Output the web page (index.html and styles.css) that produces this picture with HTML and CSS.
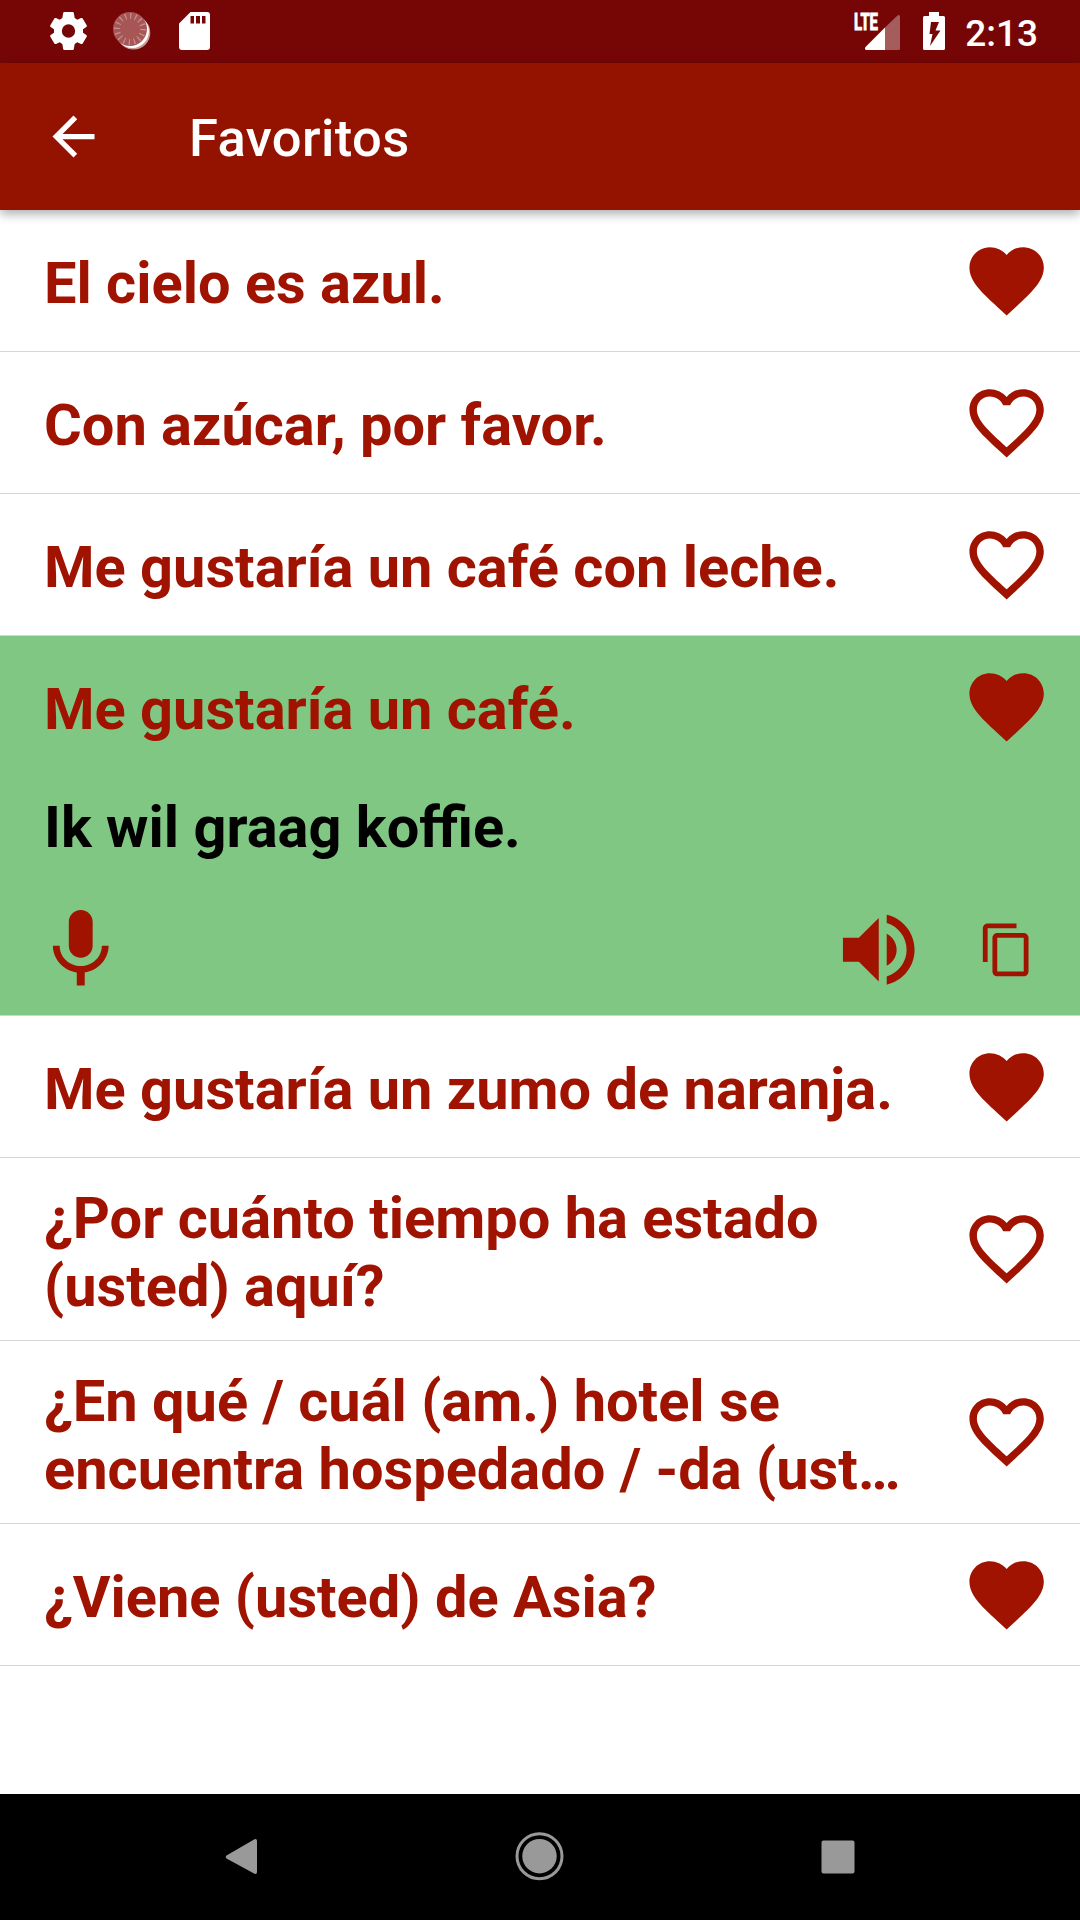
FILE: index.html
```html
<!DOCTYPE html>
<html lang="es">
<head>
<meta charset="utf-8">
<title>Favoritos</title>
<link rel="stylesheet" href="styles.css">
</head>
<body>
<svg class="defs" aria-hidden="true">
  <symbol id="heart" viewBox="0 0 24 24"><path d="M12 21.35l-1.45-1.32C5.4 15.36 2 12.28 2 8.5 2 5.42 4.42 3 7.5 3c1.74 0 3.41.81 4.5 2.09C13.09 3.81 14.76 3 16.5 3 19.58 3 22 5.42 22 8.5c0 3.78-3.4 6.86-8.55 11.54L12 21.35z"/></symbol>
  <symbol id="heart-outline" viewBox="0 0 24 24"><path d="M16.5 3c-1.74 0-3.41.81-4.5 2.09C10.91 3.81 9.24 3 7.5 3 4.42 3 2 5.42 2 8.5c0 3.78 3.4 6.86 8.55 11.54L12 21.35l1.45-1.32C18.6 15.36 22 12.28 22 8.5 22 5.42 19.58 3 16.5 3zm-4.4 15.55l-.1.1-.1-.1C7.14 14.24 4 11.39 4 8.5 4 6.5 5.5 5 7.5 5c1.54 0 3.04.99 3.57 2.36h1.87C13.46 5.99 14.96 5 16.5 5c2 0 3.5 1.5 3.5 3.5 0 2.89-3.14 5.74-7.9 10.05z"/></symbol>
</svg>
<div class="screen">
  <header class="status-bar">
    <div class="status-left">
      <svg class="status-gear" viewBox="0 0 111 114"><path fill-rule="evenodd" d="M43 0H68Q71 0 71.500 3L74 18L82 23L93 18Q96 17 97.500 19L110 40Q111.500 43 109 45L99 52V62L109 69Q111.500 71 110 74L97.500 95Q96 97 93 96L82 91L74 96L71.500 111Q71 114 68 114H43Q40 114 39.500 111L37 96L29 91L18 96Q15 97 13.500 95L1 74Q-.5 71 2 69L12 62V52L2 45Q-.5 43 1 40L13.500 19Q15 17 18 18L29 23L37 18L39.500 3Q40 0 43 0zM55.500 37a20 20 0 1 0 0 40a20 20 0 1 0 0-40z"/></svg>
      <svg class="status-sync" viewBox="0 0 38 38">
        <circle cx="20.500" cy="20.800" r="16.800" opacity=".6"/>
        <circle cx="19.300" cy="19.300" r="16.600"/>
        <circle cx="17" cy="17" r="17" class="sync-disc"/>
        <circle cx="17" cy="17" r="13" class="sync-ticks"/>
      </svg>
      <svg class="status-sd" viewBox="0 0 31 38"><path fill-rule="evenodd" d="M11.500 0H28a3 3 0 0 1 3 3v32a3 3 0 0 1-3 3H3a3 3 0 0 1-3-3V11.500zM11.500 4v7.500h3.500V4zM17 4v7.500h4V4zM23 4v7.500h3.500V4z"/></svg>
    </div>
    <div class="status-right">
      <svg class="status-signal" viewBox="0 0 48 38">
        <path opacity=".35" d="M31 14.500L43.500 2.500Q46 1 46 4V35.500a1.500 1.500 0 0 1-1.500 1.500H31z"/>
        <path d="M31 14.500V37H12.500Q10 36.500 11.500 34z"/>
        <text class="lte" x="0" y="17" textLength="24" lengthAdjust="spacingAndGlyphs">LTE</text>
      </svg>
      <svg class="status-battery" viewBox="0 0 22 38"><path fill-rule="evenodd" d="M6 0h10v4h4.500Q22 4 22 5.500V36.500Q22 38 20.500 38h-19Q0 38 0 36.500V5.500Q0 4 1.500 4H6zM8 10L6.500 22H9.500L7 34L17.500 18.500H12.500L16 10z"/></svg>
      <span class="clock">2:13</span>
    </div>
  </header>
  <div class="app-bar">
    <svg class="back" viewBox="0 0 24 24"><path d="M20 11H7.830l5.590-5.590L12 4l-8 8 8 8 1.410-1.410L7.830 13H20v-2z"/></svg>
    <h1 class="title">Favoritos</h1>
  </div>
  <main class="list">
    <div class="row"><p class="phrase">El cielo es azul.</p><svg class="fav"><use href="#heart"/></svg></div>
    <div class="row"><p class="phrase">Con azúcar, por favor.</p><svg class="fav"><use href="#heart-outline"/></svg></div>
    <div class="row"><p class="phrase">Me gustaría un café con leche.</p><svg class="fav"><use href="#heart-outline"/></svg></div>
    <section class="expanded">
      <div class="expanded-head"><p class="phrase">Me gustaría un café.</p><svg class="fav"><use href="#heart"/></svg></div>
      <p class="translation">Ik wil graag koffie.</p>
      <div class="actions">
        <svg class="action" viewBox="0 0 24 24"><path d="M12 14c1.660 0 2.990-1.340 2.990-3L15 5c0-1.660-1.340-3-3-3S9 3.340 9 5v6c0 1.660 1.340 3 3 3zm5.300-3c0 3-2.540 5.100-5.300 5.100S6.700 14 6.700 11H5c0 3.410 2.720 6.230 6 6.720V21h2v-3.280c3.280-.48 6-3.300 6-6.720h-1.700z"/></svg>
        <svg class="action speak" viewBox="0 0 24 24"><path d="M3 9v6h4l5 5V4L7 9H3zm13.500 3c0-1.770-1.020-3.290-2.500-4.030v8.050c1.480-.73 2.500-2.250 2.500-4.020zM14 3.230v2.060c2.890.86 5 3.540 5 6.710s-2.110 5.850-5 6.710v2.060c4.010-.91 7-4.490 7-8.770s-2.990-7.860-7-8.770z"/></svg>
        <svg class="copy" viewBox="0 0 24 24"><path d="M16 1H4c-1.100 0-2 .9-2 2v14h2V3h12V1zm3 4H8c-1.100 0-2 .9-2 2v14c0 1.100.9 2 2 2h11c1.100 0 2-.9 2-2V7c0-1.100-.9-2-2-2zm0 16H8V7h11v14z"/></svg>
      </div>
    </section>
    <div class="row"><p class="phrase">Me gustaría un zumo de naranja.</p><svg class="fav"><use href="#heart"/></svg></div>
    <div class="row row-tall"><p class="phrase">¿Por cuánto tiempo ha estado<br>(usted) aquí?</p><svg class="fav"><use href="#heart-outline"/></svg></div>
    <div class="row row-tall"><p class="phrase">¿En qué / cuál (am.) hotel se<br>encuentra hospedado / -da (ust…</p><svg class="fav"><use href="#heart-outline"/></svg></div>
    <div class="row"><p class="phrase">¿Viene (usted) de Asia?</p><svg class="fav"><use href="#heart"/></svg></div>
  </main>
  <nav class="nav-bar">
    <svg viewBox="0 0 52 52"><path d="M10.500 24.500L38.500 8.200Q41 7.500 41 10V41Q41 43.500 38.500 42.800L10.500 27.500Q9 26 10.500 24.500z"/></svg>
    <svg viewBox="0 0 52 52"><circle cx="25.500" cy="25.200" r="17.200"/><circle class="ring" cx="25.500" cy="25.200" r="22.500"/></svg>
    <svg viewBox="0 0 52 52"><rect x="9.500" y="9.500" width="33" height="33" rx="2"/></svg>
  </nav>
</div>
</body>
</html>
```
FILE: styles.css
```css
* { box-sizing: border-box; }
body, h1, p { margin: 0; }
body { font-family: Roboto, "Liberation Sans", sans-serif; background: #fff; }
svg { display: block; flex: none; fill: currentColor; }
.defs { display: none; }
.screen { width: 1080px; height: 1920px; display: flex; flex-direction: column; overflow: hidden; }

.status-bar { height: 63px; flex: none; display: flex; justify-content: space-between; padding: 0 42px 0 50px; background: #760606; color: #fff; }
.status-left, .status-right { display: flex; align-items: flex-start; padding-top: 12px; }
.status-gear { width: 37px; height: 38px; }
.status-sync { width: 38px; height: 38px; margin-left: 26px; }
.sync-disc { fill: #a75656; }
.sync-ticks { fill: none; stroke: #c68f8f; stroke-width: 6px; stroke-dasharray: 1.200 3.884; }
.status-sd { width: 31px; height: 38px; margin-left: 28px; }
.status-signal { width: 48px; height: 38px; margin: 1px 21px 0 0; overflow: visible; }
.lte { font: 700 23px/1 Roboto, sans-serif; stroke: currentColor; stroke-width: 1px; }
.status-battery { width: 22px; height: 38px; }
.clock { margin-left: 20px; font-size: 37px; line-height: 43px; font-weight: 500; }

.app-bar { height: 147px; flex: none; display: flex; align-items: center; padding-left: 42px; background: #931300; color: #fff; position: relative; box-shadow: 0 4px 10px rgba(0, 0, 0, .32); }
.back { width: 63px; height: 63px; }
.title { margin-left: 84px; padding-top: 3px; font-size: 52.500px; line-height: 62px; font-weight: 500; letter-spacing: .4px; }

.list { flex: 1; color: #a01300; }
.row { display: flex; align-items: center; justify-content: space-between; height: 142px; padding: 0 29px 0 44px; border-bottom: 1px solid #d6d6d6; }
.row-tall { height: 183px; }
.phrase, .translation { font-size: 57.750px; line-height: 68px; font-weight: 700; white-space: nowrap; }
.phrase { padding-top: 4px; }
.row-tall .phrase { padding-top: 6px; }
.fav { width: 89.250px; height: 89.250px; }
.expanded { height: 380px; background: #81c784; border-bottom: 1px solid #c9d8ca; }
.expanded-head { display: flex; align-items: center; justify-content: space-between; height: 141px; padding: 0 29px 0 44px; }
.translation { color: #000; padding: 16px 44px 0; }
.actions { display: flex; align-items: center; padding: 41px 44px 0 33px; }
.action { width: 95.500px; height: 95.500px; }
.speak { margin-left: auto; margin-right: 52px; }
.copy { width: 57.750px; height: 57.750px; }

.nav-bar { height: 126px; flex: none; display: flex; align-items: center; justify-content: space-between; padding: 0 216px; background: #000; color: #999; }
.nav-bar svg { width: 52px; height: 52px; }
.ring { fill: none; stroke: currentColor; stroke-width: 3px; }
```
